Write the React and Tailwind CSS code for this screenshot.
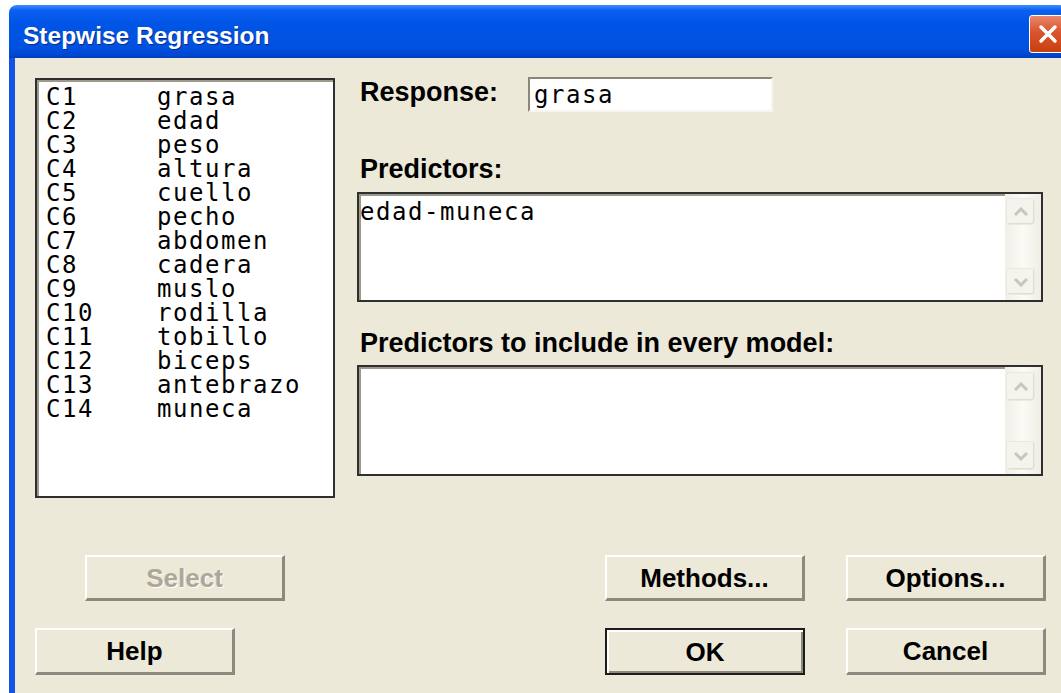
import React from 'react';

const columns = [
  ['C1', 'grasa'],
  ['C2', 'edad'],
  ['C3', 'peso'],
  ['C4', 'altura'],
  ['C5', 'cuello'],
  ['C6', 'pecho'],
  ['C7', 'abdomen'],
  ['C8', 'cadera'],
  ['C9', 'muslo'],
  ['C10', 'rodilla'],
  ['C11', 'tobillo'],
  ['C12', 'biceps'],
  ['C13', 'antebrazo'],
  ['C14', 'muneca'],
];

const sans = "font-['Liberation_Sans',Arial,sans-serif]";
const mono =
  "font-['DejaVu_Sans_Mono','Liberation_Mono',monospace] text-[24px] leading-[24px] tracking-[1.55px] text-black whitespace-pre";
const label = `${sans} font-bold text-[27px] leading-[30px] text-black pl-[3px]`;
const sunken =
  'border-2 border-[#2f2f2f] bg-white shadow-[inset_2px_2px_0_#9d9a8c]';

function ScrollArrow({ up, className }) {
  return (
    <div
      className={`w-[29px] rounded-[3px] border border-[#ebe9df] bg-[#f4f3ee] shadow-[inset_-1px_-1px_0_#e0ddd0] flex items-center justify-center ${className}`}
    >
      <svg width="16" height="10" viewBox="0 0 16 10">
        <polyline
          points={up ? '2,8 8,2 14,8' : '2,2 8,8 14,2'}
          fill="none"
          stroke="#c9c6b8"
          strokeWidth="3"
        />
      </svg>
    </div>
  );
}

function TextBox({ children, heightCls, padCls, btnCls }) {
  return (
    <div className={`${sunken} ${heightCls} flex`}>
      <div className={`flex-1 pl-[1px] pt-[6px] ${mono}`}>{children}</div>
      <div
        className={`w-[36px] px-[1px] flex flex-col justify-between bg-[linear-gradient(to_right,#f1efe7,#fbfaf6,#efede4)] ${padCls}`}
      >
        <ScrollArrow up className={btnCls} />
        <ScrollArrow className={btnCls} />
      </div>
    </div>
  );
}

function Button({ children, disabled, isDefault, className = '' }) {
  const frame = isDefault
    ? 'border-2 border-[#1c1c1c] shadow-[inset_2px_2px_0_#ffffff,inset_-2px_-2px_0_#8c8a7e]'
    : 'border-t-2 border-l-2 border-white border-r-[3px] border-b-[3px] border-r-[#8c8a7e] border-b-[#8c8a7e]';
  return (
    <button
      className={`w-[200px] bg-[#ece9d8] ${frame} ${sans} font-bold text-[26px] leading-none flex items-center justify-center ${
        disabled ? 'text-[#aca899] [text-shadow:1px_1px_0_#ffffff]' : 'text-black'
      } ${className}`}
    >
      {children}
    </button>
  );
}

export default function App() {
  return (
    <div className="w-[1061px] h-[693px] bg-white overflow-hidden pt-[5px] pl-[9px]">
      <div className="w-[1058px] h-[700px] flex flex-col">
        {/* title bar */}
        <div className="h-[53px] shrink-0 rounded-t-[8px] bg-[linear-gradient(to_bottom,#3c8dff_0%,#0b60f2_10%,#0055e6_35%,#0051e0_80%,#0049d4_92%,#003fbe_100%)] flex items-start justify-between pl-[14px]">
          <div
            className={`${sans} font-bold text-[24.5px] leading-[28px] pt-[17px] text-white [text-shadow:1px_1px_0_#0b2a8a]`}
          >
            Stepwise Regression
          </div>
          <div className="mt-[10px] w-[38px] h-[38px] rounded-[3px] border border-white bg-[linear-gradient(to_bottom,#e9876a,#d9532e_45%,#c9400f)] flex items-center justify-center">
            <svg width="20" height="20" viewBox="0 0 20 20">
              <path d="M3 3 L17 17 M17 3 L3 17" stroke="#ffffff" strokeWidth="3.5" strokeLinecap="round" />
            </svg>
          </div>
        </div>

        {/* dialog body */}
        <div className="flex-1 border-l-[6px] border-l-[#1353e6] bg-[#ece9d8]">
          <div className="flex pt-[19px] pl-[20px]">
            <div className={`${sunken} w-[300px] h-[420px] mt-[1px] pt-[5px] pl-[9px]`}>
              {columns.map(([id, name]) => (
                <div key={id} className={`flex ${mono}`}>
                  <span className="w-[111px]">{id}</span>
                  <span>{name}</span>
                </div>
              ))}
            </div>

            <div className="ml-[22px] w-[686px] flex flex-col">
              <div className="flex items-start">
                <div className={`${label} w-[171px]`}>Response:</div>
                <div className="w-[245px] h-[35px] bg-white border-2 border-t-[#8b887b] border-l-[#8b887b] border-r-[#f6f5ef] border-b-[#f6f5ef] pt-[4px] pl-[4px]">
                  <div className={mono}>grasa</div>
                </div>
              </div>

              <div className={`${label} mt-[42px]`}>Predictors:</div>
              <div className="mt-[8px]">
                <TextBox heightCls="h-[110px]" padCls="pt-[4px] pb-[5px]" btnCls="h-[27px]">
                  edad-muneca
                </TextBox>
              </div>

              <div className={`${label} mt-[26px]`}>Predictors to include in every model:</div>
              <div className="mt-[7px]">
                <TextBox heightCls="h-[111px]" padCls="pt-[5px] pb-[4px]" btnCls="h-[29px]" />
              </div>
            </div>
          </div>

          <div className="flex mt-[57px] h-[46px]">
            <Button disabled className="ml-[70px]">Select</Button>
            <Button className="ml-[320px]">Methods...</Button>
            <Button className="ml-[41px]">Options...</Button>
          </div>
          <div className="flex mt-[27px] h-[47px]">
            <Button className="ml-[20px]">Help</Button>
            <Button isDefault className="ml-[370px]">OK</Button>
            <Button className="ml-[41px]">Cancel</Button>
          </div>
        </div>
      </div>
    </div>
  );
}
